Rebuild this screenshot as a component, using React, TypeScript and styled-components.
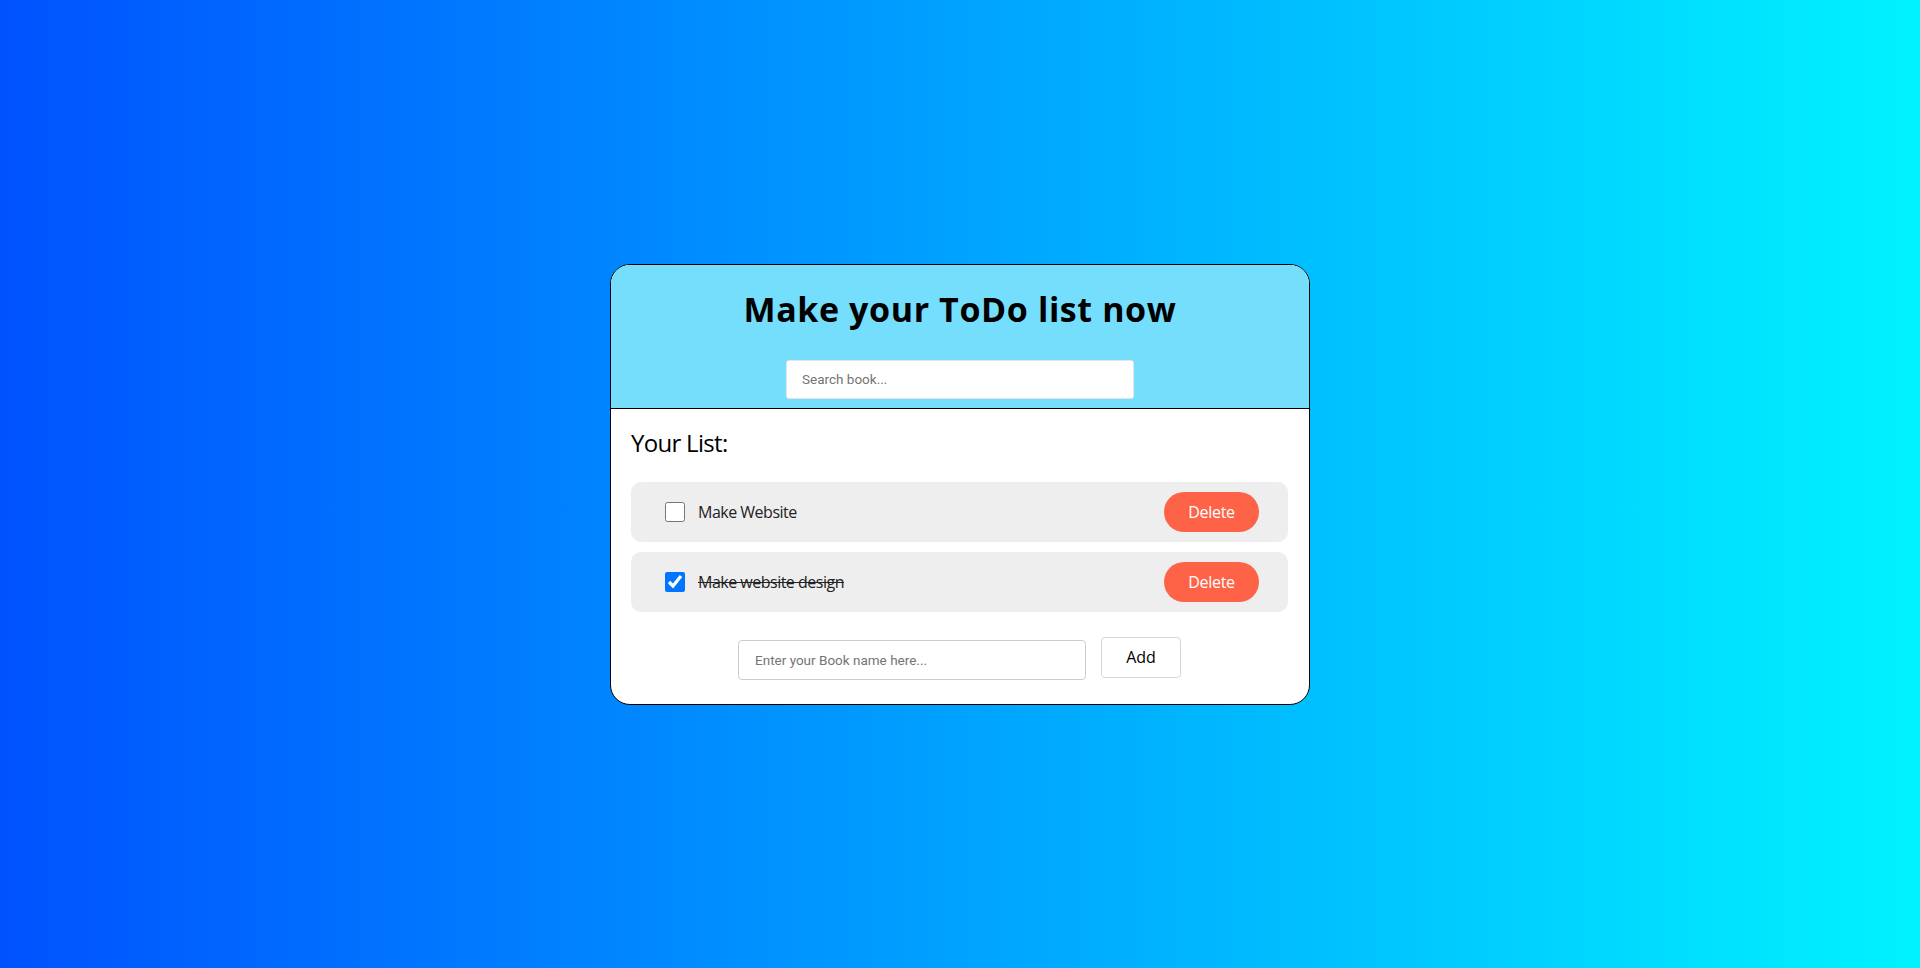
import React, { useState } from "react";
import styled, { createGlobalStyle } from "styled-components";

const GlobalStyle = createGlobalStyle`
  * { box-sizing: border-box; }
  html, body { margin: 0; padding: 0; }
  body {
    font-family: "Open Sans", "Noto Sans", sans-serif;
    background: linear-gradient(90deg, #0052ff 0%, #00f2ff 100%);
    min-height: 100vh;
  }
`;

const Page = styled.main`
  min-height: 100vh;
  display: flex;
  align-items: center;
  justify-content: center;
`;

const Card = styled.section`
  width: 700px;
  border: 1px solid #000;
  border-radius: 20px;
  overflow: hidden;
  background: #fff;
`;

const Header = styled.header`
  background: #75defc;
  border-bottom: 1px solid #000;
  padding: 22px 20px 9px;
  display: flex;
  flex-direction: column;
  align-items: center;
`;

const Title = styled.h1`
  margin: 0 0 29px;
  font-family: "Open Sans", sans-serif;
  font-weight: 700;
  font-size: 34px;
  letter-spacing: 0.6px;
  line-height: 44px;
  color: #000;
`;

const SearchInput = styled.input`
  width: 348px;
  height: 39px;
  border: 1px solid #e4e4e4;
  border-radius: 3px;
  padding: 0 15px;
  font-family: Roboto, "Liberation Sans", sans-serif;
  font-size: 13.5px;
  color: #333;
  background: #fff;
  outline: none;
  &::placeholder { color: #757575; }
`;

const Body = styled.div`
  padding: 17px 21px 24px 20px;
`;

const ListTitle = styled.h2`
  margin: 0 0 23px;
  font-family: "Open Sans", sans-serif;
  font-weight: 400;
  font-size: 24px;
  letter-spacing: -0.7px;
  line-height: 33px;
  color: #000;
`;

const List = styled.ul`
  list-style: none;
  margin: 0;
  padding: 0;
  display: flex;
  flex-direction: column;
  gap: 10px;
`;

const Row = styled.li`
  display: flex;
  align-items: center;
  height: 60px;
  padding: 10px 29px 10px 30px;
  background: #eeeeee;
  border-radius: 10px;
`;

const Check = styled.input`
  width: 20px;
  height: 20px;
  margin: 0 0 0 4px;
  accent-color: #0075ff;
`;

const Label = styled.span<{ $done: boolean }>`
  flex: 1;
  margin-left: 13px;
  font-family: "Open Sans", sans-serif;
  font-size: 16px;
  letter-spacing: -0.5px;
  color: #222;
  text-decoration: ${(p) => (p.$done ? "line-through" : "none")};
`;

const DeleteButton = styled.button`
  width: 95px;
  height: 40px;
  border: none;
  border-radius: 20px;
  background: #ff6347;
  color: #fff;
  font-family: "Open Sans", sans-serif;
  font-size: 16px;
  letter-spacing: -0.3px;
  cursor: pointer;
`;

const AddForm = styled.form`
  margin-top: 25px;
  display: flex;
  align-items: flex-start;
  justify-content: center;
  gap: 15px;
`;

const AddInput = styled.input`
  width: 348px;
  height: 40px;
  margin-top: 3px;
  border: 1px solid #cccccc;
  border-radius: 4px;
  padding: 0 16px;
  font-family: Roboto, "Liberation Sans", sans-serif;
  font-size: 13.5px;
  color: #333;
  outline: none;
  &::placeholder { color: #757575; }
`;

const AddButton = styled.button`
  width: 80px;
  height: 41px;
  border: 1px solid #d6d6d6;
  border-radius: 4px;
  background: #fff;
  color: #000;
  font-family: "Open Sans", sans-serif;
  font-size: 16px;
  cursor: pointer;
`;

type Item = { id: number; name: string; done: boolean };

export default function App() {
  const [items, setItems] = useState<Item[]>([
    { id: 1, name: "Make Website", done: false },
    { id: 2, name: "Make website design", done: true },
  ]);

  const toggle = (id: number) =>
    setItems((xs) => xs.map((x) => (x.id === id ? { ...x, done: !x.done } : x)));
  const remove = (id: number) => setItems((xs) => xs.filter((x) => x.id !== id));

  return (
    <>
      <GlobalStyle />
      <Page>
        <Card>
          <Header>
            <Title>Make your ToDo list now</Title>
            <SearchInput placeholder="Search book..." />
          </Header>
          <Body>
            <ListTitle>Your List:</ListTitle>
            <List>
              {items.map((item) => (
                <Row key={item.id}>
                  <Check type="checkbox" checked={item.done} onChange={() => toggle(item.id)} />
                  <Label $done={item.done}>{item.name}</Label>
                  <DeleteButton type="button" onClick={() => remove(item.id)}>
                    Delete
                  </DeleteButton>
                </Row>
              ))}
            </List>
            <AddForm onSubmit={(e) => e.preventDefault()}>
              <AddInput placeholder="Enter your Book name here..." />
              <AddButton type="submit">Add</AddButton>
            </AddForm>
          </Body>
        </Card>
      </Page>
    </>
  );
}
